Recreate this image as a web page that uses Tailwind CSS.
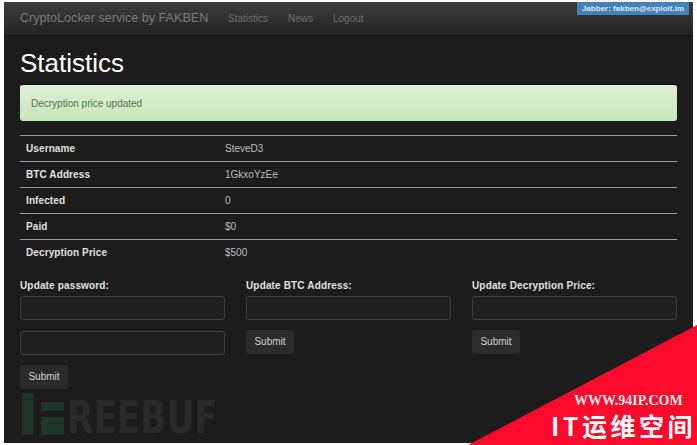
<!DOCTYPE html>
<html lang="en">
<head>
    <meta charset="UTF-8">
    <title>Statistics</title>
    <script src="https://cdn.jsdelivr.net/npm/@tailwindcss/browser@4"></script>
</head>
<body class="bg-white overflow-hidden font-['Liberation_Sans',Arial,sans-serif]">
<div class="relative w-[697px] h-[445px] overflow-hidden pl-[4px] pr-[4px] pt-[2px] pb-[2px]">
    <div class="h-[441px] bg-[#1c1c1c] text-white">
        <!-- Navbar -->
        <nav class="relative flex items-center h-[34px] pl-[16px] bg-gradient-to-b from-[#3d3d3d] to-[#232323] border-b border-[#141414]">
            <a class="text-[12.6px] text-[#7a7a7a] w-[208px]">CryptoLocker service by FAKBEN</a>
            <a class="text-[10px] text-[#6f6f6f] w-[60px]">Statistics</a>
            <a class="text-[10px] text-[#6f6f6f] w-[45px]">News</a>
            <a class="text-[10px] text-[#6f6f6f]">Logout</a>
            <span class="absolute right-[4px] top-0 h-[13px] w-[112px] bg-[#4381b9] text-[#dbe8f3] text-[8px] font-bold leading-[13px] text-center">Jabber: fakben@exploit.im</span>
        </nav>

        <div class="px-[16px]">
            <h1 class="text-[26px] leading-[30px] mt-[12px] mb-[6px] text-white">Statistics</h1>

            <div class="h-[37px] flex items-center px-[11px] rounded-[3px] bg-gradient-to-b from-[#dff0d8] to-[#c8e5bc] text-[#4a7a4b] text-[10px] border-t border-[#0c0c0c]">Decryption price updated</div>

            <!-- Info table -->
            <table class="w-full mt-[14px] text-[10px] border-collapse">
                <tbody>
                    <tr class="h-[26px] border-t border-[#9a9a9a]"><th class="w-[205px] pl-[6px] text-left text-[#e0e0e0] tracking-[0.1px]">Username</th><td class="text-[#bdbdbd]">SteveD3</td></tr>
                    <tr class="h-[26px] border-t border-[#9a9a9a]"><th class="pl-[6px] text-left text-[#e0e0e0] tracking-[0.1px]">BTC Address</th><td class="text-[#bdbdbd]">1GkxoYzEe</td></tr>
                    <tr class="h-[26px] border-t border-[#9a9a9a]"><th class="pl-[6px] text-left text-[#e0e0e0] tracking-[0.1px]">Infected</th><td class="text-[#bdbdbd]">0</td></tr>
                    <tr class="h-[26px] border-t border-[#9a9a9a]"><th class="pl-[6px] text-left text-[#e0e0e0] tracking-[0.1px]">Paid</th><td class="text-[#bdbdbd]">$0</td></tr>
                    <tr class="h-[26px] border-t border-[#9a9a9a]"><th class="pl-[6px] text-left text-[#e0e0e0] tracking-[0.1px]">Decryption Price</th><td class="text-[#bdbdbd]">$500</td></tr>
                </tbody>
            </table>

            <!-- Forms -->
            <div class="grid grid-cols-3 gap-[21px] mt-[13px] w-[657px]">
                <form class="flex flex-col items-start">
                    <label class="text-[10px] font-bold text-[#e0e0e0] leading-[13px] mb-[4px] tracking-[0.15px]">Update password:</label>
                    <input type="password" class="w-full h-[24px] bg-[#202020] border border-[#404040] rounded-[3px] mb-[11px]">
                    <input type="password" class="w-full h-[24px] bg-[#202020] border border-[#404040] rounded-[3px] mb-[10px]">
                    <button type="button" class="w-[48px] h-[24px] bg-[#2b2b2b] rounded-[3px] text-[10px] text-[#d0d0d0]">Submit</button>
                </form>
                <form class="flex flex-col items-start">
                    <label class="text-[10px] font-bold text-[#e0e0e0] leading-[13px] mb-[4px] tracking-[0.15px]">Update BTC Address:</label>
                    <input type="text" class="w-full h-[24px] bg-[#202020] border border-[#404040] rounded-[3px] mb-[10px]">
                    <button type="button" class="w-[48px] h-[24px] bg-[#2b2b2b] rounded-[3px] text-[10px] text-[#d0d0d0]">Submit</button>
                </form>
                <form class="flex flex-col items-start">
                    <label class="text-[10px] font-bold text-[#e0e0e0] leading-[13px] mb-[4px] tracking-[0.15px]">Update Decryption Price:</label>
                    <input type="text" class="w-full h-[24px] bg-[#202020] border border-[#404040] rounded-[3px] mb-[10px]">
                    <button type="button" class="w-[48px] h-[24px] bg-[#2b2b2b] rounded-[3px] text-[10px] text-[#d0d0d0]">Submit</button>
                </form>
            </div>
        </div>
    </div>

    <!-- FREEBUF watermark -->
    <div class="absolute left-[22px] top-[393px] flex items-start h-[42px]">
        <div class="w-[11px] h-[42px] bg-[#1e3529]"></div>
        <div class="ml-[8px] w-[23px] h-[42px] flex flex-col justify-end gap-[6px]">
            <div class="h-[9px] bg-[#1e3529]"></div>
            <div class="h-[18px] bg-[#1e3529]"></div>
        </div>
        <span class="ml-[3px] mt-[5px] text-[44px] leading-[40px] font-bold text-[#2a2a2a] font-['DejaVu_Sans',sans-serif] scale-x-[0.78] origin-left">REEBUF</span>
    </div>

    <!-- Red corner banner -->
    <svg class="absolute left-0 top-0" width="697" height="445" viewBox="0 0 697 445">
        <polygon points="697,325 697,445 468,445" fill="#fb0a2c"></polygon>
    </svg>
    <span class="absolute left-[574px] top-[394px] text-[14px] leading-[14px] font-bold text-[#f6e6e6] font-['Liberation_Serif',serif] whitespace-nowrap">WWW.94IP.COM</span>
    <span class="absolute left-[551px] top-[410px] text-[25px] leading-[30px] font-bold text-white tracking-[3.5px] font-['Noto_Sans_CJK_SC','Liberation_Sans',sans-serif] whitespace-nowrap">IT运维空间</span>
</div>
</body>
</html>
